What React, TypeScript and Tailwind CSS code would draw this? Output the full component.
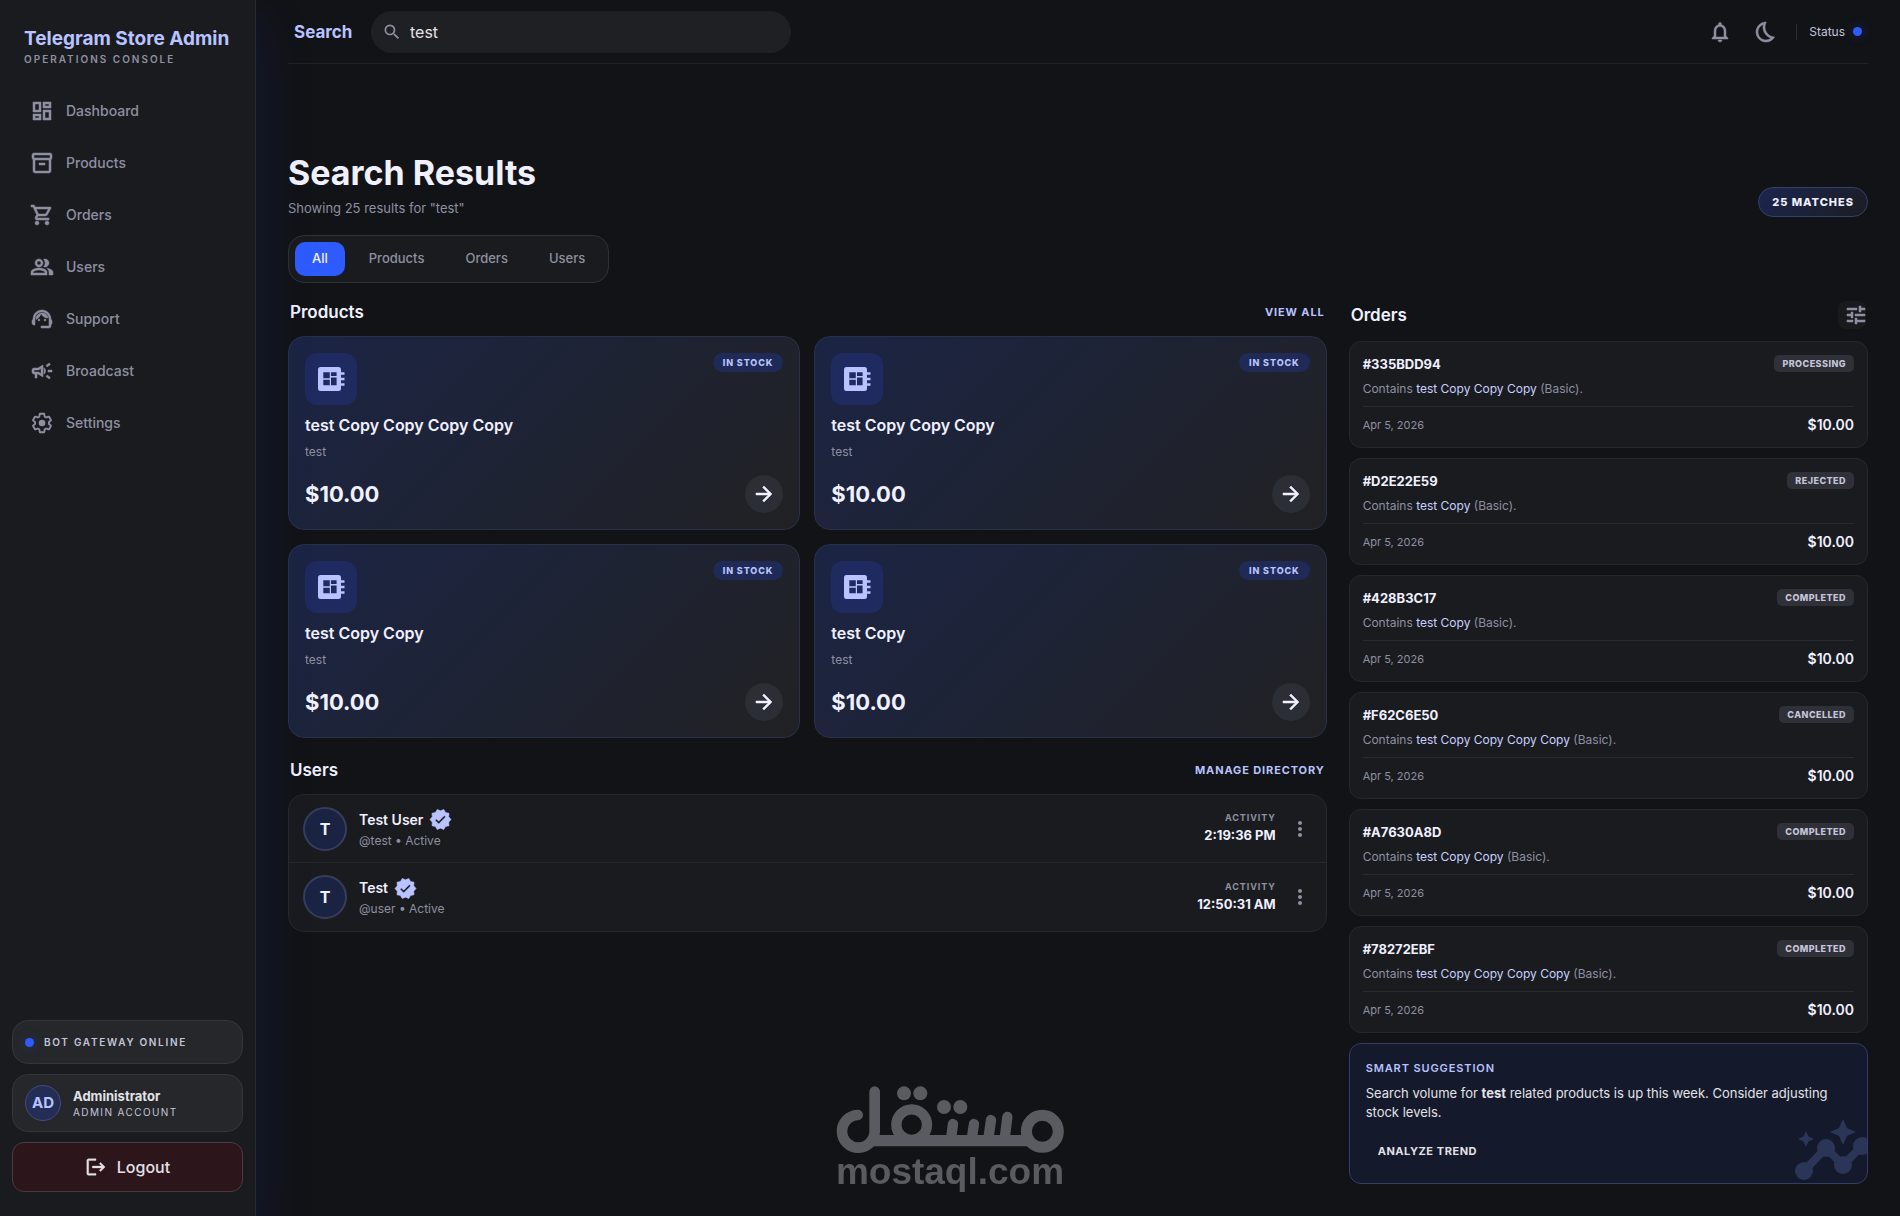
import type { ComponentType, ReactNode } from 'react'
import {
  MdArrowForward,
  MdLogout,
  MdMoreVert,
  MdNotificationsNone,
  MdOutlineBedtime,
  MdOutlineCampaign,
  MdOutlineDashboard,
  MdOutlineInventory2,
  MdOutlinePeopleAlt,
  MdOutlineShoppingCart,
  MdOutlineSupportAgent,
  MdSearch,
  MdTune,
  MdVerified,
} from 'react-icons/md'

// Gear with a solid hub
function GearIcon({ className }: { className?: string }) {
  return (
    <svg viewBox="-1 -1 26 26" className={className} fill="none" stroke="currentColor" strokeWidth="2" aria-hidden>
      <path d="M19.43 12.98c.04-.32.07-.64.07-.98s-.03-.66-.07-.98l2.11-1.65c.19-.15.24-.42.12-.64l-2-3.46c-.09-.16-.26-.25-.44-.25-.06 0-.12.01-.17.03l-2.49 1c-.52-.4-1.08-.73-1.69-.98l-.38-2.65C14.46 2.18 14.25 2 14 2h-4c-.25 0-.46.18-.49.42l-.38 2.65c-.61.25-1.17.59-1.69.98l-2.49-1c-.06-.02-.12-.03-.18-.03-.17 0-.34.09-.43.25l-2 3.46c-.13.22-.07.49.12.64l2.11 1.65c-.04.32-.07.65-.07.98s.03.66.07.98l-2.11 1.65c-.19.15-.24.42-.12.64l2 3.46c.09.16.26.25.44.25.06 0 .12-.01.17-.03l2.49-1c.52.4 1.08.73 1.69.98l.38 2.65c.03.24.24.42.49.42h4c.25 0 .46-.18.49-.42l.38-2.65c.61-.25 1.17-.59 1.69-.98l2.49 1c.06.02.12.03.18.03.17 0 .34-.09.43-.25l2-3.46c.12-.22.07-.49-.12-.64l-2.11-1.65z" />
      <circle cx="12" cy="12" r="3.6" fill="currentColor" stroke="none" />
    </svg>
  )
}

function BoardIcon() {
  return (
    <svg viewBox="0 0 27 24" className="h-6 w-[27px]" fill="currentColor" fillRule="evenodd" aria-hidden>
      <path d="M2.5 0h18A2.5 2.5 0 0 1 23 2.5v19a2.5 2.5 0 0 1-2.5 2.5h-18A2.5 2.5 0 0 1 0 21.5v-19A2.5 2.5 0 0 1 2.5 0zM5.3 5.3v6h6.5v-6zM13 5.3v3.7h5.6V5.3zM5.3 12.7v5.6h6.5v-5.6zM13 10.6v7.7h5.6v-7.7z" />
      <path d="M23 5.2h3.5v2.6H23zM23 10.7h3.5v2.6H23zM23 16.2h3.5v2.6H23z" />
    </svg>
  )
}

function TrendIcon({ className }: { className?: string }) {
  return (
    <svg viewBox="0 0 82 70" className={className} fill="currentColor" aria-hidden>
      <path d="M14 57L36 34L53 51L72 32" fill="none" stroke="currentColor" strokeWidth="8" />
      <circle cx="14" cy="57" r="9" />
      <circle cx="36" cy="34" r="9" />
      <circle cx="53" cy="51" r="9" />
      <circle cx="72" cy="32" r="9" />
      <path d="M53 5l4 9 9 4-9 4-4 9-4-9-9-4 9-4z" />
      <path d="M16 17l2.5 5.5L24 25l-5.5 2.5L16 33l-2.5-5.5L8 25l5.5-2.5z" />
    </svg>
  )
}

const navItems: { label: string; icon: ComponentType<{ className?: string }> }[] = [
  { label: 'Dashboard', icon: MdOutlineDashboard },
  { label: 'Products', icon: MdOutlineInventory2 },
  { label: 'Orders', icon: MdOutlineShoppingCart },
  { label: 'Users', icon: MdOutlinePeopleAlt },
  { label: 'Support', icon: MdOutlineSupportAgent },
  { label: 'Broadcast', icon: MdOutlineCampaign },
]

const tabs = ['All', 'Products', 'Orders', 'Users']

const products = [
  { id: 1, name: 'test Copy Copy Copy Copy', category: 'test', price: '$10.00' },
  { id: 2, name: 'test Copy Copy Copy', category: 'test', price: '$10.00' },
  { id: 3, name: 'test Copy Copy', category: 'test', price: '$10.00' },
  { id: 4, name: 'test Copy', category: 'test', price: '$10.00' },
]

const users = [
  { name: 'Test User', handle: '@test', time: '2:19:36 PM' },
  { name: 'Test', handle: '@user', time: '12:50:31 AM' },
]

const orders = [
  { id: '#335BDD94', status: 'PROCESSING', product: 'test Copy Copy Copy' },
  { id: '#D2E22E59', status: 'REJECTED', product: 'test Copy' },
  { id: '#428B3C17', status: 'COMPLETED', product: 'test Copy' },
  { id: '#F62C6E50', status: 'CANCELLED', product: 'test Copy Copy Copy Copy' },
  { id: '#A7630A8D', status: 'COMPLETED', product: 'test Copy Copy' },
  { id: '#78272EBF', status: 'COMPLETED', product: 'test Copy Copy Copy Copy' },
]

// Thickens the material glyphs, leaving out their invisible bounding box
const heavyIcon = 'size-6 shrink-0 [stroke-width:0.5] [&_path[fill=none]]:[stroke:none]'

function NavLink({ label, children }: { label: string; children: ReactNode }) {
  return (
    <a
      href="#"
      className="flex h-12 items-center gap-3 rounded-xl px-[18px] text-sm font-medium text-[#8e90a2]"
    >
      {children}
      {label}
    </a>
  )
}

function Sidebar() {
  return (
    <aside className="sticky top-0 z-10 flex h-screen w-64 shrink-0 flex-col border-r border-[#292a2e] bg-[#1a1b1f] shadow-[0_24px_48px_rgba(20,50,150,0.26)]">
      <div className="px-6 pt-[26px]">
        <p className="text-[19px] leading-[25px] font-bold text-[#b8c3ff]">Telegram Store Admin</p>
        <p className="text-[10px] leading-4 font-semibold tracking-[0.2em] text-[#8e90a2]">
          OPERATIONS CONSOLE
        </p>
      </div>

      <nav className="mt-5 flex flex-col gap-1 px-3">
        {navItems.map(({ label, icon: Icon }) => (
          <NavLink key={label} label={label}>
            <Icon className={heavyIcon} />
          </NavLink>
        ))}
        <NavLink label="Settings">
          <GearIcon className="size-6" />
        </NavLink>
      </nav>

      <div className="mt-auto flex flex-col gap-2.5 px-3 pb-6">
        <div className="flex h-11 items-center gap-2.5 rounded-2xl border border-[#35363c] bg-[#26272a] px-3">
          <span className="size-[9px] rounded-full bg-[#2e5bff] shadow-[0_0_12px_rgba(46,91,255,0.3)]" />
          <span className="text-[10px] font-semibold tracking-[0.17em] text-[#c4c5d9]">
            BOT GATEWAY ONLINE
          </span>
        </div>
        <div className="flex h-[58px] items-center gap-3 rounded-2xl border border-[#35363c] bg-[#26272a] px-3">
          <span className="flex size-9 items-center justify-center rounded-full border border-[#434c79] bg-[#232d56] text-[15px] font-bold text-[#b8c3ff]">
            AD
          </span>
          <div className="pt-0.5">
            <p className="text-[13px] leading-4 font-bold text-[#e3e2e7]">Administrator</p>
            <p className="text-[10px] leading-4 tracking-[0.14em] text-[#c4c5d9]">ADMIN ACCOUNT</p>
          </div>
        </div>
        <button className="flex h-[50px] items-center justify-center gap-2.5 rounded-xl border border-[#4b3b42] bg-[#2d161b] text-base font-medium text-[#e3e2e7]">
          <MdLogout className="size-[22px] [stroke-width:0.4] [&_path[fill=none]]:[stroke:none]" />
          Logout
        </button>
      </div>
    </aside>
  )
}

function TopBar() {
  return (
    <header className="flex h-16 items-center border-b border-[#212226] pl-1.5">
      <label htmlFor="search" className="w-[77px] pt-0.5 text-[17px] font-bold text-[#b8c3ff]">
        Search
      </label>
      <div className="flex h-[42px] w-[420px] items-center gap-2 rounded-full bg-[#1f2023] px-[11px]">
        <MdSearch className="size-5 text-[#8e90a2]" />
        <input
          id="search"
          type="text"
          defaultValue="test"
          className="min-w-0 flex-1 bg-transparent text-base text-[#e3e2e7] outline-none"
        />
      </div>
      <div className="ml-auto flex items-center text-[#8e90a2]">
        <button aria-label="Notifications">
          <MdNotificationsNone className={heavyIcon} />
        </button>
        <button aria-label="Theme" className="ml-[22px]">
          <MdOutlineBedtime className={heavyIcon} />
        </button>
        <span className="ml-[18px] h-4 w-px bg-[#2b2c31]" />
        <span className="ml-3 text-xs text-[#c4c5d9]">Status</span>
        <span className="mr-1.5 ml-2 size-[9px] rounded-full bg-[#2e5bff] shadow-[0_0_12px_rgba(46,91,255,0.3)]" />
      </div>
    </header>
  )
}

function SectionHeader({ title, children }: { title: string; children: ReactNode }) {
  return (
    <div className="mb-3 flex items-center justify-between px-0.5">
      <h2 className="text-[17px] leading-[23px] font-semibold text-[#f0f0ff]">{title}</h2>
      {children}
    </div>
  )
}

function ProductCard({ product }: { product: (typeof products)[number] }) {
  return (
    <article className="rounded-2xl border border-[#293149] bg-linear-135 from-[#1b2444] to-[#212123] p-4">
      <div className="flex items-start justify-between">
        <span className="flex size-[52px] items-center justify-center rounded-xl bg-[#1f2b60] text-[#b8c3ff]">
          <BoardIcon />
        </span>
        <span className="rounded-full bg-[#202a56] px-2.5 text-[9px] leading-[19px] font-extrabold tracking-[0.1em] text-[#b8c3ff]">
          IN STOCK
        </span>
      </div>
      <h3 className="mt-2 text-base leading-6 font-semibold text-[#f0f0ff]">{product.name}</h3>
      <p className="mt-1.5 text-xs leading-[18px] text-[#8e90a2]">{product.category}</p>
      <div className="mt-3.5 flex items-center justify-between">
        <span className="text-[22px] leading-8 font-bold text-[#f0f0ff]">{product.price}</span>
        <button
          aria-label={`Open ${product.name}`}
          className="flex size-[38px] items-center justify-center rounded-full bg-[#2c2e36] text-[#f0f0ff]"
        >
          <MdArrowForward className={heavyIcon} />
        </button>
      </div>
    </article>
  )
}

function UserRow({ user }: { user: (typeof users)[number] }) {
  return (
    <li className="flex h-[68px] items-center px-3.5">
      <span className="flex size-11 items-center justify-center rounded-full border-2 border-[#353e5f] bg-[#1a2342] text-base font-bold text-[#f0f0ff]">
        {user.name[0]}
      </span>
      <div className="ml-3">
        <p className="flex items-center gap-1.5 text-sm leading-6 font-semibold text-[#f0f0ff]">
          {user.name}
          <MdVerified className="size-[23px] text-[#b8c3ff] [stroke-width:0.6] [&_path[fill=none]]:[stroke:none]" />
        </p>
        <p className="text-xs leading-[18px] text-[#8e90a2]">{user.handle} • Active</p>
      </div>
      <div className="ml-auto pb-[3px] text-right">
        <p className="text-[9px] leading-4 font-bold tracking-[0.1em] text-[#8e90a2]">ACTIVITY</p>
        <p className="text-[13px] leading-[18px] font-bold text-[#f0f0ff]">{user.time}</p>
      </div>
      <button aria-label="More" className="ml-3 text-[#8e90a2]">
        <MdMoreVert className="size-6" />
      </button>
    </li>
  )
}

function OrderCard({ order }: { order: (typeof orders)[number] }) {
  return (
    <article className="rounded-xl border border-[#27282c] bg-[#1a1b1f] px-[13px] pt-[13px] pb-3">
      <div className="flex h-5 items-center justify-between">
        <h3 className="text-[13px] font-bold text-[#f0f0ff]">{order.id}</h3>
        <span className="self-start rounded-[5px] bg-[#303138] px-2 text-[9px] leading-[17px] font-extrabold tracking-[0.05em] text-[#c4c5d9]">
          {order.status}
        </span>
      </div>
      <p className="mt-1 text-xs leading-5 text-[#8e90a2]">
        Contains <span className="text-[#c8d0ff]">{order.product}</span> (Basic).
      </p>
      <div className="mt-[7px] flex items-center justify-between border-t border-[#292a2e] pt-2 leading-5">
        <time className="text-[11px] text-[#8e90a2]">Apr 5, 2026</time>
        <span className="text-sm leading-5 font-semibold text-[#f0f0ff]">$10.00</span>
      </div>
    </article>
  )
}

function SmartSuggestion() {
  return (
    <section className="relative h-[141px] overflow-hidden rounded-xl border border-[#333e66] bg-[#14192b] px-4 pt-3.5">
      <h3 className="text-[11px] leading-5 font-semibold tracking-[0.08em] text-[#b8c3ff]">SMART SUGGESTION</h3>
      <p className="mt-1.5 text-[13px] leading-[19px] text-[#e3e2e7]">
        Search volume for <strong className="font-bold">test</strong> related products is up this week. Consider
        adjusting stock levels.
      </p>
      <button className="mt-[13px] px-3 py-2 text-[11px] leading-4 font-bold tracking-[0.05em] text-[#e3e2e7]">
        ANALYZE TREND
      </button>
      <TrendIcon className="absolute -right-[5px] -bottom-px h-[70px] w-[82px] text-[#2b3557]" />
    </section>
  )
}

function Watermark() {
  return (
    <div className="pointer-events-none fixed bottom-[26px] left-1/2 z-20 flex w-[230px] -translate-x-1/2 flex-col items-center text-[#5a5b60]">
      <svg
        viewBox="105 78 690 207"
        className="w-full"
        role="img"
        aria-label="Mostaql"
        fill="none"
        stroke="currentColor"
        strokeLinecap="round"
      >
        <circle cx="727" cy="217" r="48" strokeWidth="33" />
        <circle cx="335" cy="197" r="46" strokeWidth="31" />
        <path d="M224 98V217A49 49 0 1 1 173 168" strokeWidth="32" />
        <path d="M212 245H690" strokeWidth="34" strokeLinecap="butt" />
        <path d="M459 195L453 240M522 195L515 240M573 183L565 240M622 174L614 240" strokeWidth="31" />
        <g fill="currentColor" stroke="none">
          <circle cx="312" cy="103" r="21" />
          <circle cx="361" cy="103" r="21" />
          <circle cx="432" cy="144" r="21" />
          <circle cx="481" cy="144" r="21" />
        </g>
      </svg>
      <span className="font-['Liberation_Sans',Arial,sans-serif] text-[37px] leading-9 font-bold">mostaql.com</span>
    </div>
  )
}

function App() {
  return (
    <div className="flex min-h-screen bg-[#121317] font-['Inter',sans-serif] text-[#e3e2e7]">
      <Sidebar />
      <div className="min-w-0 flex-1 px-8 pb-8">
        <TopBar />
        <main className="flex flex-col gap-[18px] pt-[88px]">
          <div className="flex items-end justify-between">
            <div>
              <h1 className="text-[34px] leading-[42px] font-bold text-[#f0f0ff]">Search Results</h1>
              <p className="mt-1.5 text-[13px] leading-[17px] text-[#8e90a2]">Showing 25 results for "test"</p>
            </div>
            <span className="rounded-full border border-[#35406a] bg-linear-135 from-[#1b2550] to-[#1c1d22] px-[13px] text-[11px] leading-7 font-extrabold tracking-[0.09em] text-[#f0f0ff]">
              25 MATCHES
            </span>
          </div>

          <div className="flex gap-[7px] self-start rounded-2xl border border-[#303136] bg-[#1a1b1f] p-1.5">
            {tabs.map((tab) => (
              <button
                key={tab}
                className={
                  tab === 'All'
                    ? 'h-[34px] rounded-[10px] bg-[#2e5bff] px-[17px] text-[13px] font-medium text-[#f0f0ff]'
                    : 'h-[34px] rounded-[10px] px-[17px] text-[13px] font-medium text-[#8e90a2]'
                }
              >
                {tab}
              </button>
            ))}
          </div>

          <div className="grid grid-cols-[2fr_1fr] items-start gap-[22px]">
            <div className="flex flex-col gap-[21px]">
              <section>
                <SectionHeader title="Products">
                  <a href="#" className="text-[11px] font-bold tracking-[0.08em] text-[#b8c3ff]">
                    VIEW ALL
                  </a>
                </SectionHeader>
                <div className="grid grid-cols-2 gap-3.5">
                  {products.map((product) => (
                    <ProductCard key={product.id} product={product} />
                  ))}
                </div>
              </section>

              <section>
                <SectionHeader title="Users">
                  <a href="#" className="text-[11px] font-bold tracking-[0.08em] text-[#b8c3ff]">
                    MANAGE DIRECTORY
                  </a>
                </SectionHeader>
                <ul className="divide-y divide-[#27282c] rounded-2xl border border-[#27282c] bg-[#1a1b1f]">
                  {users.map((user) => (
                    <UserRow key={user.handle} user={user} />
                  ))}
                </ul>
              </section>
            </div>

            <section>
              <SectionHeader title="Orders">
                <button
                  aria-label="Filter orders"
                  className="flex size-7 items-center overflow-hidden rounded-lg bg-[#191a1e] pl-1.5 text-[#8e90a2]"
                >
                  <MdTune className={heavyIcon} />
                </button>
              </SectionHeader>
              <div className="flex flex-col gap-2.5">
                {orders.map((order) => (
                  <OrderCard key={order.id} order={order} />
                ))}
                <SmartSuggestion />
              </div>
            </section>
          </div>
        </main>
      </div>
      <Watermark />
    </div>
  )
}

export default App
